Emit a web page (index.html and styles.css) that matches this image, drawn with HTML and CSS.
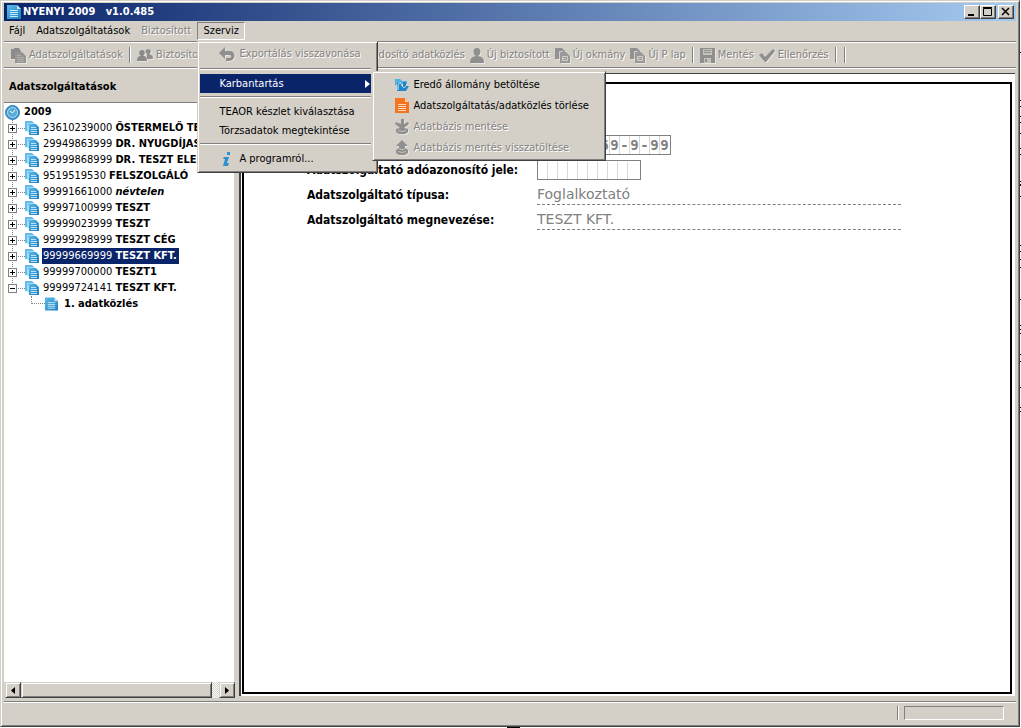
FILE: index.html
```html
<!DOCTYPE html>
<html lang="hu">
<head>
<meta charset="utf-8">
<title>NYENYI 2009 v1.0.485</title>
<link rel="stylesheet" href="styles.css">
</head>
<body>
<svg width="0" height="0" class="defs" aria-hidden="true">
  <defs>
    <linearGradient id="blue" x1="0" y1="0" x2="1" y2="1"><stop offset="0" stop-color="#5db9ea"/><stop offset="1" stop-color="#1b80c0"/></linearGradient>
    <symbol id="doc" viewBox="0 0 14 14"><path fill="url(#blue)" d="M0 0h10l4 4v10H0z"/><path fill="#bfe3f8" d="M10 0v4h4z"/><path stroke="#c5e8fa" d="M3 5.500h8M3 7.500h8M3 9.500h8M3 11.500h8"/></symbol>
    <symbol id="docs" viewBox="0 0 14 14"><path fill="#63bbea" d="M0 0h7l2 2v8H0z"/><path fill="#a3daf6" d="M2 2h7l2 2H4v7H2z"/><path fill="url(#blue)" d="M3 3h8l3 3v8H4V4H3z"/><path stroke="#b9e2f8" d="M6 6.500h5M6 8.500h6M6 10.500h6M6 12.500h6"/></symbol>
    <symbol id="gdocs" viewBox="0 0 15 15"><path fill="#8c8c8c" d="M0 1h3V0h5l2 3v2H4v6H0z"/><path fill="#949494" d="M4 4h7l4 4v7H4z"/><path stroke="#b4b1ac" d="M6 7.500h4M6 9.500h7M6 11.500h7M6 13.500h7"/></symbol>
    <symbol id="newdoc" viewBox="0 0 15 15"><path fill="#929292" d="M0 0h7l3 3v2H4v6H0z"/><path fill="#999" d="M5 4h6l4 4v7H5z"/><path fill="none" stroke="#d4d0c8" d="M4.500 11V3.500H8M7.500 8.500h5v4h-5zM8 10.500h3"/></symbol>
    <symbol id="person" viewBox="0 0 14 15"><path fill="#8f8f8f" d="M7 0c5 0 4 7 1 8 4 1 6 2 6 7H0c0-5 2-6 6-7C3 7 2 0 7 0"/></symbol>
  </defs>
</svg>
<div class="window">
  <header class="titlebar">
    <svg class="app-icon" width="14" height="14"><use href="#doc"/></svg>
    <h1>NYENYI 2009 &nbsp; v1.0.485</h1>
    <button class="cap" aria-label="Kis méret"><svg width="12" height="10"><path d="M2 7h6v2H2z"/></svg></button>
    <button class="cap" aria-label="Teljes méret"><svg width="12" height="10"><path fill="none" stroke="#000" d="M1.500 1.500h8v7h-8zM1 .5h9"/></svg></button>
    <button class="cap close" aria-label="Bezárás"><svg width="12" height="10"><path stroke="#000" stroke-width="1.500" d="M2 1l7 7M9 1L2 8"/></svg></button>
  </header>

  <nav class="menubar">
    <button>Fájl</button>
    <button>Adatszolgáltatások</button>
    <button disabled>Biztosított</button>
    <div class="menu-holder">
      <button class="open" aria-expanded="true">Szerviz</button>
      <div class="popup main-menu">
        <button class="item tall" disabled><svg width="16" height="14"><path fill="#8f8f8f" d="M0 6l6-6v4h5c7 1 5 10-1 10H7v-3h3c3 0 3-3 0-3H6v4z"/></svg>Exportálás visszavonása</button>
        <hr>
        <div class="sub-holder">
          <button class="item current" aria-expanded="true">Karbantartás<svg class="arrow" width="5" height="8"><path fill="#fff" d="M0 0l5 4-5 4z"/></svg></button>
          <div class="popup sub-menu">
            <button class="item"><svg width="14" height="14"><path fill="#55b0e2" d="M0 1h5l2 2h5v3H2L0 8z"/><path fill="#2387c6" d="M2 5h3l2 3h1V4h3v4h3l-3 5H2z"/><path fill="none" stroke="#c9ebfb" d="M3 12V8c0-2 1-3 3-3M7 7c0 3 3 3 4 1"/></svg>Eredő állomány betöltése</button>
            <button class="item"><svg width="14" height="15"><path fill="#f47421" d="M0 0h10l4 4v11H0z"/><path fill="#ffd0a8" d="M10 0v4h4z"/><path stroke="#ffd9b8" d="M3 6.500h8M3 8.500h8M3 10.500h8M3 12.500h8"/></svg>Adatszolgáltatás/adatközlés törlése</button>
            <button class="item" disabled><svg width="14" height="15"><path fill="#8f8f8f" d="M6 0h3v5l4-2 1 2-5 4 4 1v3l-3 2H4l-3-2v-3l4-1-5-4 1-2 5 2z"/><path fill="none" stroke="#c5c2bb" d="M3 11.500l4 1 4-1"/></svg>Adatbázis mentése</button>
            <button class="item" disabled><svg width="14" height="15"><path fill="#8f8f8f" d="M7 0l6 6h-3v2l3 2v3l-3 2H4l-3-2v-3l3-2V6H1z"/><path fill="none" stroke="#c5c2bb" d="M3 11.500l4 1 4-1M4 8.500l2 1h2l2-1"/></svg>Adatbázis mentés visszatöltése</button>
          </div>
        </div>
        <hr>
        <button class="item">TEAOR készlet kiválasztása</button>
        <button class="item">Törzsadatok megtekintése</button>
        <hr>
        <button class="item about"><svg width="8" height="14"><path fill="#2c91cf" d="M4 0h3v3H4zM1 5h5L4 11h2l-1 3H0l2-7H0z"/></svg>A programról...</button>
      </div>
    </div>
  </nav>

  <div class="toolbar">
    <div class="group first">
      <button disabled><svg width="15" height="15"><use href="#gdocs"/></svg>Adatszolgáltatások</button>
      <i class="sep"></i>
      <button disabled><svg width="16" height="12"><path fill="#8f8f8f" d="M11 0c4 0 3 5 1 5 3 1 4 2 4 5h-6V5C8 4 8 0 11 0"/><path fill="#8a8a8a" d="M5 1c4 0 3 5 1 6 3 0 4 2 4 5H0c0-3 1-5 4-5C2 6 1 1 5 1"/></svg>Biztosítottak</button>
    </div>
    <div class="group">
      <button disabled>Módosító adatközlés</button>
      <button disabled><svg width="14" height="15"><use href="#person"/></svg>Új biztosított</button>
      <button disabled><svg width="15" height="15"><use href="#newdoc"/></svg>Új okmány</button>
      <button disabled><svg width="15" height="15"><use href="#newdoc"/></svg>Új P lap</button>
      <i class="sep"></i>
      <button disabled><svg width="15" height="15"><path fill="#8f8f8f" d="M0 0h15v15H0z"/><path fill="#c5c2bb" d="M3 1h9v6H3zM4 10h7v5H4z"/><path fill="#8f8f8f" d="M4 2h7v1H4zM4 4h7v1H4zM5 11h2v3H5z"/></svg>Mentés</button>
      <button disabled><svg width="16" height="13"><path fill="#8f8f8f" d="M0 6l3-2 3 4 8-8 2 2L7 13H6z"/></svg>Ellenőrzés</button>
      <i class="sep"></i><i class="sep"></i>
    </div>
  </div>

  <main class="body">
    <aside class="side">
      <h2>Adatszolgáltatások</h2>
      <div class="tree">
        <div class="root"><svg width="15" height="15"><circle cx="7.500" cy="7.500" r="7" fill="#398fc5" stroke="#2f86bd"/><circle cx="7.500" cy="7.500" r="5" fill="#58abd8" stroke="#b5e0f5"/><path fill="none" stroke="#fff" d="M5 6l2.500 2L10 5"/></svg><b>2009</b></div>
        <ul>
          <li><button aria-label="Kibontás"></button><svg width="14" height="14"><use href="#docs"/></svg><span>23610239000 <b>ŐSTERMELŐ TESZT</b></span></li>
          <li><button aria-label="Kibontás"></button><svg width="14" height="14"><use href="#docs"/></svg><span>29949863999 <b>DR. NYUGDÍJAS</b></span></li>
          <li><button aria-label="Kibontás"></button><svg width="14" height="14"><use href="#docs"/></svg><span>29999868999 <b>DR. TESZT ELEK</b></span></li>
          <li><button aria-label="Kibontás"></button><svg width="14" height="14"><use href="#docs"/></svg><span>9519519530 <b>FELSZOLGÁLÓ</b></span></li>
          <li><button aria-label="Kibontás"></button><svg width="14" height="14"><use href="#docs"/></svg><span>99991661000 <b><em>névtelen</em></b></span></li>
          <li><button aria-label="Kibontás"></button><svg width="14" height="14"><use href="#docs"/></svg><span>99997100999 <b>TESZT</b></span></li>
          <li><button aria-label="Kibontás"></button><svg width="14" height="14"><use href="#docs"/></svg><span>99999023999 <b>TESZT</b></span></li>
          <li><button aria-label="Kibontás"></button><svg width="14" height="14"><use href="#docs"/></svg><span>99999298999 <b>TESZT CÉG</b></span></li>
          <li><button aria-label="Kibontás"></button><svg width="14" height="14"><use href="#docs"/></svg><span class="selected">99999669999 <b>TESZT KFT.</b></span></li>
          <li><button aria-label="Kibontás"></button><svg width="14" height="14"><use href="#docs"/></svg><span>99999700000 <b>TESZT1</b></span></li>
          <li><button class="minus" aria-label="Összecsukás"></button><svg width="14" height="14"><use href="#docs"/></svg><span>99999724141 <b>TESZT KFT.</b></span></li>
        </ul>
        <div class="child"><i class="elbow"></i><svg width="13" height="14"><use href="#doc"/></svg><b>1. adatközlés</b></div>
      </div>
      <div class="scroll">
        <button aria-label="Balra"><svg width="4" height="7"><path d="M4 0v7L0 3.500z"/></svg></button>
        <div class="thumb"></div>
        <div class="track"></div>
        <button aria-label="Jobbra"><svg width="4" height="7"><path d="M0 0v7l4-3.500z"/></svg></button>
      </div>
    </aside>
    <section class="view">
      <div class="page">
        <dl>
          <dt>Adatszolgáltató adószáma:</dt>
          <dd><span class="cells"><i>9</i><i>9</i><i>9</i><i>9</i><i>9</i><i>6</i><i>6</i><i>9</i><i>-</i><i>9</i><i>-</i><i>9</i><i>9</i></span></dd>
          <dt><label for="taxid">Adatszolgáltató adóazonosító jele:</label></dt>
          <dd><input id="taxid" class="taxid" maxlength="10"></dd>
          <dt>Adatszolgáltató típusa:</dt>
          <dd class="line">Foglalkoztató</dd>
          <dt>Adatszolgáltató megnevezése:</dt>
          <dd class="line">TESZT KFT.</dd>
        </dl>
      </div>
    </section>
  </main>

  <footer class="status"><i class="sep"></i><div class="gauge"></div></footer>
</div>
</body>
</html>
```
FILE: styles.css
```css
* { box-sizing: border-box; }
html, body { height: 100%; }
body {
  margin: 0;
  padding: 0 1px 1px 0;
  background:
    linear-gradient(#000, #000) 507px 100% / 13px 1px no-repeat,
    linear-gradient(#fff 52px, #000 52px 53px, #fff 53px 100px, #000 100px 101px, #fff 101px 106px, #000 106px 107px, #fff 107px 116px, #000 116px 117px, #fff 117px 122px, #000 122px 123px, #fff 123px 133px, #000 133px 134px, #fff 134px 148px, #000 148px 149px, #fff 149px 154px, #000 154px 155px, #fff 155px 181px, #000 181px 182px, #fff 182px 184px, #000 184px 186px, #fff 186px 196px, #000 196px 197px, #fff 197px 245px, #000 245px 246px, #fff 246px 251px, #000 251px 252px, #fff 252px 259px, #000 259px 260px, #fff 260px 267px, #000 267px 268px, #fff 268px 299px, #000 299px 300px, #fff 300px 325px, #000 325px 326px, #fff 326px 329px, #000 329px 330px, #fff 330px 333px, #000 333px 334px, #fff 334px 354px, #000 354px 355px, #fff 355px 361px, #000 361px 362px, #fff 362px 387px, #000 387px 388px, #fff 388px 407px, #000 407px 408px, #fff 408px 411px, #000 411px 412px, #fff 412px) 100% 0 / 1px 100% no-repeat,
    #fff;
  font: 11px/16px "DejaVu Sans Condensed", "DejaVu Sans", sans-serif;
  color: #000;
  overflow: hidden;
}
.defs { position: absolute; }
svg { display: block; flex: none; }
button { font: inherit; color: inherit; background: none; border: 0; padding: 0; margin: 0; }
button:disabled { color: #848280; text-shadow: 1px 1px 0 #fff; }
button:disabled svg { filter: drop-shadow(1px 1px 0 #e8e5df); }
h1, h2 { margin: 0; font-size: 11px; line-height: 16px; }

.window {
  height: 100%;
  display: flex;
  flex-direction: column;
  background: #d4d0c8;
  border: 1px solid #d4d0c8;
  border-right-color: #404040;
  border-bottom-color: #404040;
  box-shadow: inset 1px 1px 0 #fff, inset -1px -1px 0 #808080;
  padding: 2px 3px 1px 3px;
}
.titlebar {
  display: flex;
  align-items: center;
  height: 18px;
  flex: none;
  padding: 0 2px 0 3px;
  background: linear-gradient(90deg, #0a246a, #a6caf0);
  color: #fff;
}
.titlebar h1 { flex: 1; padding-left: 2px; }
.cap {
  width: 16px;
  height: 14px;
  padding: 1px;
  background: #d4d0c8;
  border: 1px solid;
  border-color: #fff #404040 #404040 #fff;
  box-shadow: inset -1px -1px 0 #808080;
}
.cap.close { margin-left: 2px; }

.menubar {
  display: flex;
  height: 21px;
  flex: none;
  gap: 1px;
  padding: 1px 0 1px;
  border-bottom: 1px solid #808080;
}
.menubar > button { padding: 0 5px; line-height: 16px; }
.menu-holder { position: relative; }
.open {
  height: 18px;
  padding: 0 5px;
  border: 1px solid;
  border-color: #808080 #fff #fff #808080;
}
.popup {
  position: absolute;
  z-index: 2;
  background: #d4d0c8;
  border: 1px solid;
  border-color: #d4d0c8 #404040 #404040 #d4d0c8;
  box-shadow: inset 1px 1px 0 #fff, inset -1px -1px 0 #808080;
}
.main-menu { left: 0; top: 19px; width: 181px; padding: 1px 6px 3px 2px; }
.popup hr {
  height: 2px;
  margin: 3px 0 4px;
  border: 0;
  border-top: 1px solid #808080;
  border-bottom: 1px solid #fff;
}
.item {
  display: flex;
  align-items: center;
  width: 100%;
  height: 19px;
  padding-left: 19px;
  white-space: nowrap;
  text-align: left;
}
.item svg { margin-right: 4px; }
.item.tall { height: 22px; }
.item.about { height: 20px; }
.item.about svg { margin: 0 8px 0 4px; }
.item.current { background: #0a246a; color: #fff; }
.item .arrow { margin: 0 1px 0 auto; }
.sub-holder { position: relative; }
.sub-menu { left: 172px; top: -3px; width: 234px; padding: 2px 3px; color: #000; }
.sub-menu .item { height: 21px; }

.toolbar {
  display: flex;
  height: 26px;
  flex: none;
  border-top: 1px solid #fff;
  border-bottom: 1px solid #808080;
}
.group { display: flex; align-items: center; gap: 5px; }
.group.first { width: 360px; padding-left: 7px; flex: none; }
.toolbar button { display: flex; align-items: center; gap: 3px; white-space: nowrap; }
.sep { width: 2px; height: 16px; flex: none; margin: 0 1px; border-left: 1px solid #808080; border-right: 1px solid #fff; }

.body {
  flex: 1;
  min-height: 0;
  display: flex;
  border-top: 1px solid #fff;
}
.side { flex: none; width: 231px; display: flex; flex-direction: column; padding-bottom: 3px; }
.side h2 { height: 34px; padding: 10px 5px 0; border-bottom: 1px solid #808080; }
.tree { flex: 1; background: #fff; overflow: hidden; padding-top: 1px; border-right: 1px solid #d4d0c8; white-space: nowrap; }
.root { display: flex; align-items: center; gap: 4px; padding-left: 1px; height: 16px; }
.tree ul {
  margin: 0;
  padding: 0 0 0 4px;
  list-style: none;
  background: repeating-linear-gradient(#808080 0 1px, #fff 1px 2px) 8px 0 / 1px 168px no-repeat;
}
.tree li {
  display: flex;
  align-items: center;
  height: 16px;
  background: repeating-linear-gradient(90deg, #808080 0 1px, transparent 1px 2px) 10px 8px / 7px 1px no-repeat;
}
.tree li button {
  width: 9px;
  height: 9px;
  border: 1px solid #808080;
  background: linear-gradient(#000, #000) 1px 3px / 5px 1px no-repeat, linear-gradient(#000, #000) 3px 1px / 1px 5px no-repeat, #fff;
}
.tree li button.minus { background: linear-gradient(#000, #000) 1px 3px / 5px 1px no-repeat, #fff; }
.tree li svg { margin: 0 4px 0 8px; }
.tree li span { padding: 0 2px 0 1px; margin-left: -1px; }
.tree .selected { background: #0a246a; color: #fff; }
.child { display: flex; align-items: center; height: 16px; padding-left: 27px; }
.child .elbow { width: 14px; height: 8px; align-self: flex-start; border: dotted #808080; border-width: 0 0 1px 1px; }
.child b { padding-left: 6px; }
.scroll { display: flex; height: 16px; flex: none; padding-left: 1px; }
.scroll button, .thumb {
  display: grid;
  place-items: center;
  width: 16px;
  height: 16px;
  border: 1px solid;
  border-color: #d4d0c8 #404040 #404040 #d4d0c8;
  box-shadow: inset 1px 1px 0 #fff, inset -1px -1px 0 #808080;
}
.scroll .thumb { flex: 1; }
.track { width: 7px; background: repeating-conic-gradient(#fff 0 25%, #d4d0c8 0 50%) 0 0 / 2px 2px; }

.view {
  flex: 1;
  margin: 4px 1px 5px 4px;
  padding: 8px 3px 2px 1px;
  background: #fff;
  border: solid #404040;
  border-width: 1px 0 0 2px;
}
.page { height: 100%; border: 2px solid #000; padding: 48px 63px 0; }
dl { margin: 0; display: grid; grid-template-columns: 230px minmax(0, 364px); grid-auto-rows: 25px; align-items: center; }
dt { font-size: 12px; font-weight: bold; white-space: nowrap; }
dd { margin: 0; display: flex; }
.cells {
  display: grid;
  grid-template-columns: repeat(13, 10px);
  padding: 0 1px;
  height: 20px;
  border: 1px solid #808080;
  font: bold 14px/18px "DejaVu Sans Mono", monospace;
  color: #808080;
}
.cells i { font-style: normal; text-align: center; border-left: 1px solid #d8d8d8; }
.cells i:first-child { border-left-color: transparent; }
.taxid {
  width: 104px;
  height: 20px;
  padding: 0 1px;
  border: 1px solid #808080;
  border-radius: 0;
  outline: 0;
  background: repeating-linear-gradient(90deg, #fff 0 9px, #d8d8d8 9px 10px) 0 100% / 92px 17px no-repeat;
}
.line { height: 20px; font: 14px/19px "DejaVu Sans", sans-serif; color: #808080; border-bottom: 1px dashed #808080; }

.status {
  display: flex;
  justify-content: flex-end;
  height: 24px;
  flex: none;
  gap: 5px;
  padding: 4px 12px 5px 0;
  border-top: 1px solid #808080;
  box-shadow: inset 0 1px 0 #fff;
}
.status .sep { height: 14px; margin: 0; }
.gauge { width: 100px; height: 14px; border: 1px solid; border-color: #808080 #fff #fff #808080; }
```
